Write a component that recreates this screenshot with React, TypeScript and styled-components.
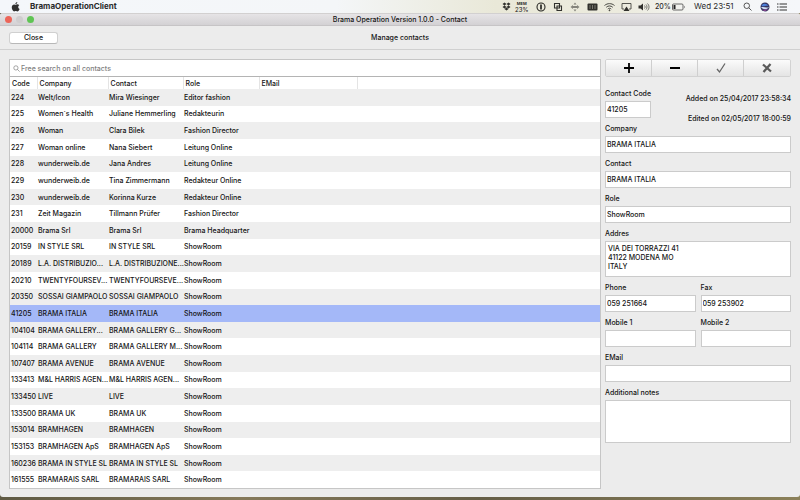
import React from "react";
import styled, { createGlobalStyle } from "styled-components";

const GlobalStyle = createGlobalStyle`
  * { box-sizing: border-box; }
  body {
    margin: 0;
    font-family: Inter, "Liberation Sans", sans-serif;
    font-size: 7px;
    font-weight: 500;
    line-height: 11px;
    color: #141414;
    background: #6f6850;
  }
  button, input, textarea { font: inherit; color: inherit; }
`;

const Desktop = styled.div`
  min-height: 100vh;
  display: flex;
  flex-direction: column;
  padding-bottom: 3px;
  background: linear-gradient(90deg, #5f5a44, #85795a 30%, #655e47 60%, #8b8059);
`;

const MenuBar = styled.header`
  height: 13px;
  display: flex;
  align-items: center;
  padding: 0 13px 0 11px;
  color: #2a2a2a;
  background: linear-gradient(90deg, #f4f7fb 0%, #f4f6f8 42%, #e9e8d8 62%, #ecebde 78%, #f5f6f6 88%, #f5f7fa 100%);
`;

const AppName = styled.strong`
  margin-left: 10px;
  font-size: 8px;
  font-weight: 700;
`;

const StatusItems = styled.div`
  margin-left: auto;
  display: flex;
  align-items: center;
  gap: 7px;
`;

const StatusItem = styled.div<{ $width?: number; $gap?: number }>`
  width: ${(p) => p.$width ?? 10}px;
  height: 12px;
  display: flex;
  align-items: center;
  gap: ${(p) => p.$gap ?? 0}px;
  white-space: nowrap;
  svg { flex: none; }
`;

const Clock = styled(StatusItem)`
  font-size: 8px;
  font-weight: 400;
`;

const Memory = styled.span`
  display: flex;
  flex-direction: column;
  align-items: center;
  font-size: 6px;
  line-height: 7px;
  small {
    font-size: 4px;
    line-height: 5px;
    font-weight: 700;
  }
`;

const Window = styled.main`
  flex: 1;
  display: flex;
  flex-direction: column;
  background: #ececec;
  border-radius: 3px;
  overflow: hidden;
`;

const TitleBar = styled.div`
  height: 13px;
  display: grid;
  grid-template-columns: 1fr auto 1fr;
  align-items: center;
  padding: 0 5px;
  background: linear-gradient(#e6e4e6, #d3d1d4);
  border-top: 1px solid #d2d0d0;
  border-bottom: 1px solid #c6c4c6;
`;

const Lights = styled.div`
  display: flex;
  gap: 4px;
`;

const Light = styled.button<{ $color: string }>`
  width: 7px;
  height: 7px;
  padding: 0;
  border: 0;
  border-radius: 50%;
  background: ${(p) => p.$color};
`;

const Title = styled.h1`
  margin: 0;
  font-size: 7px;
  font-weight: 500;
`;

const Toolbar = styled.div`
  height: 24px;
  display: grid;
  grid-template-columns: 1fr auto 1fr;
  align-items: center;
  padding: 0 9px;
  border-bottom: 1px solid #d0d0d0;
`;

const CloseButton = styled.button`
  justify-self: start;
  width: 49px;
  height: 12px;
  padding: 0;
  line-height: 10px;
  border: 1px solid #d0d0d0;
  border-bottom-color: #b8b8b8;
  border-radius: 3px;
  background: #fff;
`;

const Heading = styled.h2`
  margin: 0;
  font-size: 7px;
  font-weight: 500;
`;

const Content = styled.div`
  flex: 1;
  display: grid;
  grid-template-columns: minmax(0, 1fr) 186px;
  gap: 4px;
  padding: 9px 9px 8px;
`;

const ListPanel = styled.section`
  display: flex;
  flex-direction: column;
  background: #fff;
  border: 1px solid #c6c6c6;
`;

const SearchBox = styled.label`
  height: 17px;
  flex: none;
  display: flex;
  align-items: center;
  gap: 1px;
  padding-left: 3px;
  color: #808080;
  border-bottom: 1px solid #b4b4b4;
`;

const SearchInput = styled.input`
  flex: 1;
  padding: 0;
  border: 0;
  outline: 0;
  background: none;
  &::placeholder { color: #808080; opacity: 1; }
`;

const TableArea = styled.div`
  flex: 1;
  display: grid;
`;

const Table = styled.table`
  width: 100%;
  height: 100%;
  table-layout: fixed;
  border-collapse: collapse;
`;

const Col = styled.col<{ $width?: number }>`
  width: ${(p) => (p.$width ? `${p.$width}px` : "auto")};
`;

const HeadCell = styled.th`
  height: 12px;
  padding: 0 2px;
  text-align: left;
  font-weight: 500;
  border-right: 1px solid #e4e4e4;
  &:last-child { border-right: 0; }
`;

const Row = styled.tr`
  &:nth-child(odd) { background: #eeeeee; }
  &[aria-selected="true"] { background: #a4b8f8; }
`;

const Cell = styled.td`
  padding: 0 1px;
  white-space: nowrap;
`;

const Form = styled.form`
  display: flex;
  flex-direction: column;
  gap: 5px;
`;

const Actions = styled.div`
  height: 18px;
  display: grid;
  grid-template-columns: repeat(4, 1fr);
  margin-bottom: 6px;
  border: 1px solid #d2d2d2;
  border-radius: 2px;
  overflow: hidden;
`;

const Action = styled.button`
  display: grid;
  place-items: center;
  padding: 0;
  border: 0;
  border-right: 1px solid #cfcfcf;
  background: linear-gradient(#fbfbfb, #e4e4e4);
  &:last-child { border-right: 0; }
`;

const Pair = styled.div<{ $columns?: string }>`
  display: grid;
  grid-template-columns: ${(p) => p.$columns ?? "1fr 1fr"};
  gap: 5px;
`;

const Field = styled.label`
  display: flex;
  flex-direction: column;
  gap: 2px;
  white-space: nowrap;
`;

const TextBox = styled.input`
  width: 100%;
  height: 17px;
  padding: 0 0 0 1px;
  border: 1px solid #cbcbcb;
  border-radius: 0;
  background: #fff;
`;

const TextArea = styled.textarea<{ $height: number }>`
  display: block;
  width: 100%;
  height: ${(p) => p.$height}px;
  padding: 2px;
  line-height: 9px;
  white-space: pre-wrap;
  border: 1px solid #cbcbcb;
  border-radius: 0;
  background: #fff;
  resize: none;
`;

const Stamps = styled.div`
  height: 30px;
  display: flex;
  flex-direction: column;
  gap: 9px;
  padding-top: 5px;
  text-align: right;
  white-space: nowrap;
`;

const contacts: string[][] = [
  ["224", "Welt/Icon", "Mira Wiesinger", "Editor fashion"],
  ["225", "Women´s Health", "Juliane Hemmerling", "Redakteurin"],
  ["226", "Woman", "Clara Bilek", "Fashion Director"],
  ["227", "Woman online", "Nana Siebert", "Leitung Online"],
  ["228", "wunderweib.de", "Jana Andres", "Leitung Online"],
  ["229", "wunderweib.de", "Tina Zimmermann", "Redakteur Online"],
  ["230", "wunderweib.de", "Korinna Kurze", "Redakteur Online"],
  ["231", "Zeit Magazin", "Tillmann Prüfer", "Fashion Director"],
  ["20000", "Brama Srl", "Brama Srl", "Brama Headquarter"],
  ["20159", "IN STYLE SRL", "IN STYLE SRL", "ShowRoom"],
  ["20189", "L.A. DISTRIBUZIO...", "L.A. DISTRIBUZIONE...", "ShowRoom"],
  ["20210", "TWENTYFOURSEV...", "TWENTYFOURSEVE...", "ShowRoom"],
  ["20350", "SOSSAI GIAMPAOLO", "SOSSAI GIAMPAOLO", "ShowRoom"],
  ["41205", "BRAMA ITALIA", "BRAMA ITALIA", "ShowRoom"],
  ["104104", "BRAMA GALLERY...", "BRAMA GALLERY G...", "ShowRoom"],
  ["104114", "BRAMA GALLERY", "BRAMA GALLERY M...", "ShowRoom"],
  ["107407", "BRAMA AVENUE", "BRAMA AVENUE", "ShowRoom"],
  ["133413", "M&L HARRIS AGEN...", "M&L HARRIS AGEN...", "ShowRoom"],
  ["133450", "LIVE", "LIVE", "ShowRoom"],
  ["133500", "BRAMA UK", "BRAMA UK", "ShowRoom"],
  ["153014", "BRAMHAGEN", "BRAMHAGEN", "ShowRoom"],
  ["153153", "BRAMHAGEN ApS", "BRAMHAGEN ApS", "ShowRoom"],
  ["160236", "BRAMA IN STYLE SL", "BRAMA IN STYLE SL", "ShowRoom"],
  ["161555", "BRAMARAIS SARL", "BRAMARAIS SARL", "ShowRoom"],
];

const AppleIcon = () => (
  <svg width="9" height="10" viewBox="0 0 18 20" fill="#303030">
    <path d="M12.6 0c.2 2-1.700 4.300-3.900 4.200C8.500 2.300 10.500.2 12.600 0zM9.200 5.400c.9 0 1.900-.9 3.600-.9 1.600 0 2.900.8 3.700 2-3.100 1.800-2.600 6 .6 7.300-.8 2.300-2.500 5-4.200 5-1.300 0-1.700-.8-3.300-.8s-2.100.8-3.300.8C3.900 18.800 1.500 14.600 1.500 11c0-3.900 2.400-6.200 4.900-6.200 1.300 0 2.200.6 2.800.6z" />
  </svg>
);

const DropboxIcon = () => (
  <svg width="9" height="9" viewBox="0 0 18 18" fill="#30302c">
    <path d="M5 1l4 3-4 3-4-3zM13 1l4 3-4 3-4-3zM5 7l4 3-4 3-4-3zM13 7l4 3-4 3-4-3zM5 14l4-3 4 3-4 3z" />
  </svg>
);

const OneIcon = () => (
  <svg width="10" height="10" viewBox="0 0 20 20" fill="none" stroke="#282824">
    <circle cx="10" cy="10" r="8" strokeWidth="2.200" />
    <path d="M10 5v10" strokeWidth="3.400" />
  </svg>
);

const SquaresIcon = () => (
  <svg width="10" height="10" viewBox="0 0 20 20" fill="none" stroke="#30302c" strokeWidth="2.200">
    <path d="M7 12H3V3h10v4M8 8h9v9H8zM8 12h5V8" />
  </svg>
);

const ArrowsIcon = () => (
  <svg width="10" height="10" viewBox="0 0 20 20" fill="#85847c">
    <path d="M10 1l3 4H7zM10 19l3-4H7zM1 10l5-4v2h8V6l5 4-5 4v-2H6v2z" />
  </svg>
);

const ChipIcon = () => (
  <svg width="11" height="10" viewBox="0 0 22 20">
    <rect x="1" y="3" width="20" height="14" rx="2" fill="#30302c" />
    <path d="M6 6v8M11 6v8M16 6v8" stroke="#8b8a80" strokeWidth="1.600" />
  </svg>
);

const WifiIcon = () => (
  <svg width="11" height="10" viewBox="0 0 22 20" fill="none" stroke="#45453f" strokeWidth="2">
    <path d="M1 7c6-5 14-5 20 0M4.500 10.500c4-3.500 9-3.500 13 0M7.500 14c2-2 5-2 7 0" />
    <circle cx="11" cy="16.500" r="1" fill="#45453f" />
  </svg>
);

const AirplayIcon = () => (
  <svg width="11" height="10" viewBox="0 0 22 20">
    <path d="M6 14H2V3h18v11h-4" fill="none" stroke="#45453f" strokeWidth="1.800" />
    <path d="M11 9l6 9H5z" fill="#30302c" />
  </svg>
);

const VolumeIcon = () => (
  <svg width="12" height="10" viewBox="0 0 24 20" fill="none" stroke="#55554f" strokeWidth="1.600">
    <path d="M1 7h4l5-4v14l-5-4H1z" fill="#30302c" stroke="none" />
    <path d="M13 7c1.500 2 1.500 4 0 6M16 5c2.700 3 2.700 7 0 10M19 3c4 4 4 10 0 14" />
  </svg>
);

const BatteryIcon = () => (
  <svg width="13" height="8" viewBox="0 0 26 16">
    <rect x="1" y="2" width="21" height="12" rx="2" fill="none" stroke="#444" strokeWidth="1.600" />
    <path d="M3 4h4v8H3z" fill="#222" />
    <path d="M24 5.500c1.500 1 1.500 4 0 5z" fill="#444" />
  </svg>
);

const SearchIcon = ({ size, color }: { size: number; color: string }) => (
  <svg width={size} height={size} viewBox="0 0 18 18" fill="none" stroke={color} strokeWidth="1.800">
    <circle cx="7.500" cy="7.500" r="5.500" />
    <path d="M11.500 11.500L17 17" />
  </svg>
);

const SiriIcon = () => (
  <svg width="10" height="10" viewBox="0 0 20 20">
    <circle cx="10" cy="10" r="9" fill="#35335f" />
    <path d="M3 8c3-6 10-6 14 0-5-2-8 2-14 0z" fill="#4c7fd8" />
    <path d="M2 11c5-3 10 2 16-1-2 5-11 6-16 1z" fill="#cfe0f4" />
    <path d="M5 15c4 1 7 0 10-1-2 4-7 5-10 1z" fill="#a34b9e" />
  </svg>
);

const MenuIcon = () => (
  <svg width="10" height="10" viewBox="0 0 20 20" stroke="#333" strokeWidth="2">
    <path d="M0 4h3M5 4h15M0 10h3M5 10h15M0 16h3M5 16h15" />
  </svg>
);

const ActionIcon = ({ d, color, width }: { d: string; color: string; width: number }) => (
  <svg width="12" height="12" viewBox="0 0 24 24" fill="none" stroke={color} strokeWidth={width}>
    <path d={d} />
  </svg>
);

function TextField({ label, value = "" }: { label: string; value?: string }) {
  return (
    <Field>
      {label}
      <TextBox defaultValue={value} />
    </Field>
  );
}

export default function App() {
  return (
    <Desktop>
      <GlobalStyle />
      <MenuBar>
        <AppleIcon />
        <AppName>BramaOperationClient</AppName>
        <StatusItems>
          <StatusItem $width={27} $gap={4}>
            <DropboxIcon />
            <Memory>
              <small>MEM</small>
              23%
            </Memory>
          </StatusItem>
          <StatusItem><OneIcon /></StatusItem>
          <StatusItem><SquaresIcon /></StatusItem>
          <StatusItem><ArrowsIcon /></StatusItem>
          <StatusItem><ChipIcon /></StatusItem>
          <StatusItem><WifiIcon /></StatusItem>
          <StatusItem><AirplayIcon /></StatusItem>
          <StatusItem><VolumeIcon /></StatusItem>
          <StatusItem $width={32} $gap={1}>
            20%
            <BatteryIcon />
          </StatusItem>
          <Clock $width={42}>Wed 23:51</Clock>
          <StatusItem><SearchIcon size={9} color="#444" /></StatusItem>
          <StatusItem><SiriIcon /></StatusItem>
          <StatusItem><MenuIcon /></StatusItem>
        </StatusItems>
      </MenuBar>
      <Window>
        <TitleBar>
          <Lights>
            <Light $color="#ec6559" aria-label="Close window" />
            <Light $color="#cfcdcf" aria-label="Minimize window" />
            <Light $color="#5fc454" aria-label="Zoom window" />
          </Lights>
          <Title>Brama Operation Version 1.0.0 - Contact</Title>
        </TitleBar>
        <Toolbar>
          <CloseButton>Close</CloseButton>
          <Heading>Manage contacts</Heading>
        </Toolbar>
        <Content>
          <ListPanel>
            <SearchBox>
              <SearchIcon size={7} color="#808080" />
              <SearchInput placeholder="Free search on all contacts" aria-label="Free search on all contacts" />
            </SearchBox>
            <TableArea>
              <Table>
                <colgroup>
                  <Col $width={27} />
                  <Col $width={71} />
                  <Col $width={75} />
                  <Col $width={76} />
                  <Col $width={98} />
                  <Col />
                </colgroup>
                <thead>
                  <tr>
                    {["Code", "Company", "Contact", "Role", "EMail", ""].map((name) => (
                      <HeadCell key={name}>{name}</HeadCell>
                    ))}
                  </tr>
                </thead>
                <tbody>
                  {contacts.map((contact) => (
                    <Row key={contact[0]} aria-selected={contact[0] === "41205"}>
                      {contact.map((text, i) => (
                        <Cell key={i}>{text}</Cell>
                      ))}
                      <Cell />
                      <Cell />
                    </Row>
                  ))}
                </tbody>
              </Table>
            </TableArea>
          </ListPanel>
          <Form>
            <Actions>
              <Action type="button" aria-label="Add">
                <ActionIcon d="M12 2v20M2 12h20" color="#000" width={3.6} />
              </Action>
              <Action type="button" aria-label="Remove">
                <ActionIcon d="M2 12h20" color="#000" width={3.6} />
              </Action>
              <Action type="button" aria-label="Confirm">
                <ActionIcon d="M4 14l5 6L20 3" color="#666" width={2.6} />
              </Action>
              <Action type="button" aria-label="Cancel">
                <ActionIcon d="M4 5l16 14M19 4L5 20" color="#5a5a5a" width={4.6} />
              </Action>
            </Actions>
            <Pair $columns="46px 1fr">
              <TextField label="Contact Code" value="41205" />
              <Stamps>
                <span>Added on 25/04/2017 23:58:34</span>
                <span>Edited on 02/05/2017 18:00:59</span>
              </Stamps>
            </Pair>
            <TextField label="Company" value="BRAMA ITALIA" />
            <TextField label="Contact" value="BRAMA ITALIA" />
            <TextField label="Role" value="ShowRoom" />
            <Field>
              Addres
              <TextArea $height={36} defaultValue={"VIA DEI TORRAZZI 41\n41122 MODENA MO\nITALY"} />
            </Field>
            <Pair>
              <TextField label="Phone" value="059 251664" />
              <TextField label="Fax" value="059 253902" />
            </Pair>
            <Pair>
              <TextField label="Mobile 1" />
              <TextField label="Mobile 2" />
            </Pair>
            <TextField label="EMail" />
            <Field>
              Additional notes
              <TextArea $height={43} />
            </Field>
          </Form>
        </Content>
      </Window>
    </Desktop>
  );
}
